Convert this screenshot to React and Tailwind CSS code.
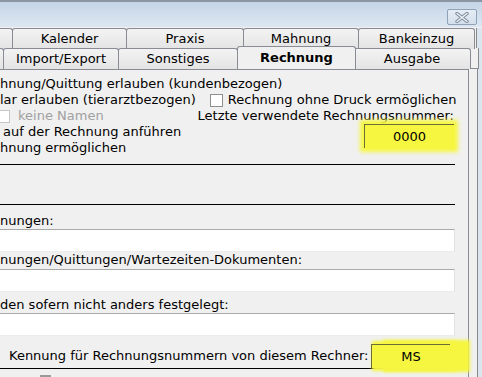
const font = { fontFamily: '"DejaVu Sans", Verdana, sans-serif' };

function Tab({ label, className = '', active = false }) {
  return (
    <div
      className={
        'flex items-center justify-center border border-b-0 border-[#898c95] rounded-t-[3px] ' +
        (active
          ? 'bg-[#f0f0f0] font-bold h-[23px] -mt-[2px] -mx-[2px] z-10 '
          : 'bg-gradient-to-b from-[#f3f3f3] to-[#e4e4e4] h-[21px] ') +
        className
      }
    >
      {label}
    </div>
  );
}

function Check({ disabled = false }) {
  return (
    <span
      className={
        'inline-block shrink-0 w-[13px] h-[13px] border bg-white ' +
        (disabled ? 'border-[#c6c6c6] bg-[#f4f4f4]' : 'border-[#8f8f8f]')
      }
    />
  );
}

function Field() {
  return <div className="h-[23px] w-[455px] bg-white border-t border-[#a9a9a9] border-r border-r-[#e3e3e3] border-b border-b-[#ececec]" />;
}

function CloseGlyph() {
  return (
    <svg width="14" height="11" viewBox="0 0 14 11">
      <path d="M2 1.5 L12 9.5 M12 1.5 L2 9.5" stroke="#7d8b9b" strokeWidth="3.4" strokeLinecap="round" />
      <path d="M2 1.5 L12 9.5 M12 1.5 L2 9.5" stroke="#eef3f8" strokeWidth="1.4" strokeLinecap="round" />
    </svg>
  );
}

export default function App() {
  return (
    <div className="w-[482px] h-[377px] overflow-hidden bg-[#f0f0f0] text-[13px] text-black leading-[16px]" style={font}>
      {/* title bar */}
      <div className="h-[27px] border-t-2 border-[#8c96a3] bg-gradient-to-b from-[#c5d5e7] to-[#dde7f2] flex justify-end">
        <div className="mt-[7px] mr-[5px] w-[30px] h-[16px] border border-[#8ea2b8] rounded-[2px] bg-gradient-to-b from-[#e6edf5] to-[#d3dfec] flex items-center justify-center">
          <CloseGlyph />
        </div>
      </div>

      {/* tabs row 1 */}
      <div className="flex h-[21px] pt-[1px] bg-[#f0f0f0]">
        <Tab label="" className="w-[14px] -ml-[1px] border-l-0 rounded-tl-none" />
        <Tab label="Kalender" className="w-[115px] -ml-px" />
        <Tab label="Praxis" className="w-[118px] -ml-px" />
        <Tab label="Mahnung" className="w-[116px] -ml-px" />
        <Tab label="Bankeinzug" className="w-[117px] -ml-px" />
        <div className="flex-1 bg-[#dbe5f0] border-l border-[#8a8a8a] ml-[1px]" />
      </div>

      {/* tabs row 2 */}
      <div className="flex h-[21px] items-end">
        <Tab label="" className="w-[4px] border-l-0 rounded-tl-none" />
        <Tab label="Import/Export" className="w-[116px] -ml-px" />
        <Tab label="Sonstiges" className="w-[120px] -ml-px" />
        <Tab label="Rechnung" active className="w-[119px] -ml-px" />
        <Tab label="Ausgabe" className="w-[118px] -ml-px" />
        <div className="flex-1 h-full flex">
          <div className="w-[7px] border-b border-[#898c95]" />
          <div className="flex-1 bg-[#dbe5f0] border-l border-[#8a8a8a]" />
        </div>
      </div>

      <div className="flex">
        {/* panel */}
        <div className="w-[469px] border-t border-[#898c95] border-r border-r-[#898c95] flex flex-col pt-[6px] whitespace-nowrap [&>*]:shrink-0">
          <div>hnung/Quittung erlauben (kundenbezogen)</div>
          <div className="flex items-center">
            <span>lar erlauben (tierarztbezogen)</span>
            <span className="ml-[14px] flex items-center">
              <Check />
              <span className="ml-[5px]">Rechnung ohne Druck ermöglichen</span>
            </span>
          </div>
          <div className="flex">
            <div className="w-[195px] shrink-0">
              <div className="flex items-center -ml-[3px]">
                <Check disabled />
                <span className="ml-[8px] text-[#a0a0a0]">keine Namen</span>
              </div>
              <div className="pl-[3px]">auf der Rechnung anführen</div>
              <div>hnung ermöglichen</div>
            </div>
            <div className="flex flex-col items-end w-[259px]">
              <div>Letzte verwendete Rechnungsnummer:</div>
              <div className="relative z-10 w-[90px] h-[24px] bg-[#f6f640] shadow-[0_0_4px_4px_#f6f640] border-t border-l border-[#6d6d3a] flex items-center justify-center">
                0000
              </div>
            </div>
          </div>
          <div className="h-px w-[455px] bg-black mt-[8px]" />
          <div className="h-px w-[455px] bg-black mt-[39px]" />
          <div className="mt-[8px]">nungen:</div>
          <Field />
          <div>nungen/Quittungen/Wartezeiten-Dokumenten:</div>
          <div className="mt-px"><Field /></div>
          <div className="mt-[5px]">den sofern nicht anders festgelegt:</div>
          <Field />
          <div className="flex items-end mt-[8px] w-[450px] border-b border-black">
            <span className="ml-[9px] mb-[4px]">Kennung für Rechnungsnummern von diesem Rechner:</span>
            <div className="relative z-10 ml-auto w-[79px] h-[24px] bg-[#f6f640] shadow-[4px_0_3px_3px_#f6f640,16px_0_3px_4px_#f6f640] border-t border-l border-[#6d6d3a] flex items-center justify-center">
              MS
            </div>
          </div>
          <div className="ml-[40px] mt-[5px] h-[20px]">
            <span className="inline-block w-[11px] h-[11px] bg-[#9a9a9a]" />
          </div>
        </div>
        {/* window frame */}
        <div className="flex-1 flex">
          <div className="w-[8px] bg-[#f0f0f0]" />
          <div className="flex-1 bg-[#dbe5f0] border-l border-[#8a8a8a]" />
        </div>
      </div>
    </div>
  );
}
